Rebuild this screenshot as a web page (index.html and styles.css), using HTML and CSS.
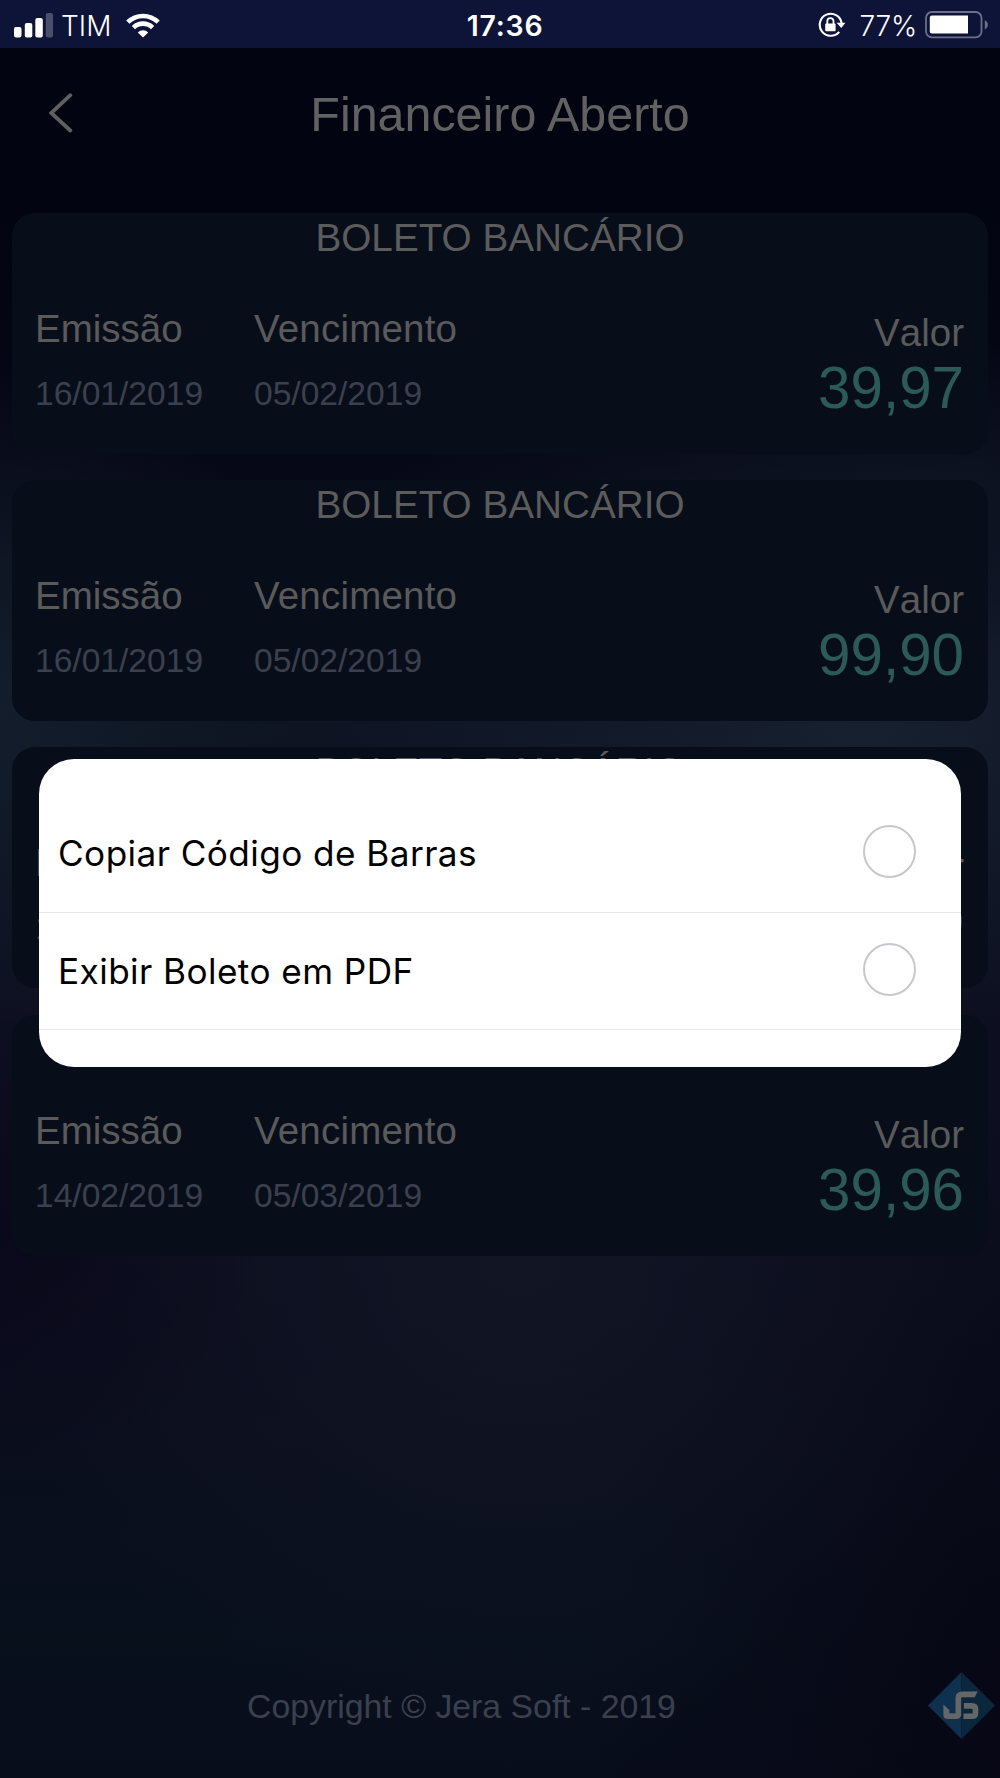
FILE: index.html
```html
<!DOCTYPE html>
<html lang="pt-BR">
<head>
<meta charset="utf-8">
<title>Financeiro Aberto</title>
<link rel="stylesheet" href="styles.css">
</head>
<body>
<div class="screen">
  <div class="status-bar">
    <div class="status-left">
      <svg class="signal" width="39" height="25" viewBox="0 0 39 25">
        <rect x="0" y="14" width="7.5" height="10.5" rx="2" fill="#fff"/>
        <rect x="10.8" y="10" width="7.5" height="14.5" rx="2" fill="#fff"/>
        <rect x="21.3" y="5" width="7.5" height="19.5" rx="2" fill="#fff"/>
        <rect x="31.8" y="0" width="7.2" height="24.5" rx="2" fill="#4b4f6b"/>
      </svg>
      <span class="carrier">TIM</span>
      <svg class="wifi" width="34" height="25" viewBox="0 0 34 25">
        <g fill="none" stroke="#fff" stroke-width="4.6">
          <path d="M1.8 9.2A21.6 21.6 0 0 1 32.2 9.2"/>
          <path d="M7.4 14.6A13.6 13.6 0 0 1 26.6 14.6"/>
        </g>
        <path d="M17 24.6L11.8 19.4A7.4 7.4 0 0 1 22.2 19.4Z" fill="#fff"/>
      </svg>
    </div>
    <div class="clock">17:36</div>
    <div class="status-right">
      <svg class="lock" width="28" height="26" viewBox="0 0 28 26">
        <path d="M21.2 19.8A11 11 0 1 1 23.6 11" fill="none" stroke="#fff" stroke-width="2.1"/>
        <path d="M18.6 10.8H27.4L23.3 16Z" fill="#fff"/>
        <rect x="7.2" y="11.6" width="10.4" height="7.6" rx="1" fill="#fff"/>
        <path d="M9.3 12V9.2a3.1 3.1 0 0 1 6.2 0V12" fill="none" stroke="#fff" stroke-width="1.8"/>
      </svg>
      <span class="percent">77%</span>
      <svg class="battery" width="63" height="28" viewBox="0 0 63 28">
        <rect x="1" y="1" width="55.5" height="25.4" rx="6" fill="none" stroke="#6c7089" stroke-width="1.8"/>
        <path d="M59.8 9.2Q62.8 10.5 62.8 13.8T59.8 18.4Z" fill="#6c7089"/>
        <path d="M7 4.6H43V22.4H7Q4.8 22.4 4.8 20.2V6.8Q4.8 4.6 7 4.6Z" fill="#fff"/>
      </svg>
    </div>
  </div>

  <header class="header">
    <svg class="back" width="24" height="40" viewBox="0 0 24 40">
      <path d="M21.3 2.2L2.2 20L21.3 37.5" fill="none" stroke="#5f5f60" stroke-width="3.8" stroke-linecap="round"/>
    </svg>
    <h1 class="title">Financeiro Aberto</h1>
  </header>

  <main class="cards">
    <article class="card">
      <h2 class="card-title">BOLETO BANCÁRIO</h2>
      <div class="card-body">
        <div class="field"><span class="label">Emissão</span><span class="date">16/01/2019</span></div>
        <div class="field"><span class="label">Vencimento</span><span class="date">05/02/2019</span></div>
        <div class="amount"><span class="label">Valor</span><span class="value">39,97</span></div>
      </div>
    </article>
    <article class="card">
      <h2 class="card-title">BOLETO BANCÁRIO</h2>
      <div class="card-body">
        <div class="field"><span class="label">Emissão</span><span class="date">16/01/2019</span></div>
        <div class="field"><span class="label">Vencimento</span><span class="date">05/02/2019</span></div>
        <div class="amount"><span class="label">Valor</span><span class="value">99,90</span></div>
      </div>
    </article>
    <article class="card">
      <h2 class="card-title">BOLETO BANCÁRIO</h2>
      <div class="card-body">
        <div class="field"><span class="label">Emissão</span><span class="date">14/02/2019</span></div>
        <div class="field"><span class="label">Vencimento</span><span class="date">05/03/2019</span></div>
        <div class="amount"><span class="label">Valor</span><span class="value">99,90</span></div>
      </div>
    </article>
    <article class="card">
      <h2 class="card-title">BOLETO BANCÁRIO</h2>
      <div class="card-body">
        <div class="field"><span class="label">Emissão</span><span class="date">14/02/2019</span></div>
        <div class="field"><span class="label">Vencimento</span><span class="date">05/03/2019</span></div>
        <div class="amount"><span class="label">Valor</span><span class="value">39,96</span></div>
      </div>
    </article>
  </main>

  <footer class="footer">
    <p class="copyright">Copyright © Jera Soft - 2019</p>
    <svg class="logo" width="67" height="67" viewBox="0 0 68 68">
      <path d="M34 0L0 34L34 68Z" fill="#0f3150"/>
      <path d="M34 0L68 34L34 68Z" fill="#0b273c"/>
      <g fill="none" stroke="#646667" stroke-width="5.8" stroke-linejoin="round">
        <path d="M30.8 44.9V26.5Q30.8 22.8 34.6 22.8H47.5"/>
        <path d="M22 44.9H28Q30.8 44.9 30.8 42"/>
        <path d="M36.4 34.4H44.6Q48.2 34.4 48.2 37.7V41.4Q48.2 44.9 44.8 44.9H36"/>
      </g>
      <path d="M15.6 33L21.6 38.5V42H25V47.8H20Q15.6 47.8 15.6 43.4Z" fill="#646667"/>
      <path d="M46 19.9H50.4L47.4 25.7H46Z" fill="#646667"/>
    </svg>
  </footer>

  <div class="modal">
    <div class="option"><span>Copiar Código de Barras</span><i class="radio"></i></div>
    <div class="option"><span>Exibir Boleto em PDF</span><i class="radio"></i></div>
  </div>
</div>
</body>
</html>
```
FILE: styles.css
```css
* { box-sizing: border-box; }

body { margin: 0; background: #070a16; }

.screen {
  position: relative;
  display: flex;
  flex-direction: column;
  width: 1000px;
  height: 1778px;
  overflow: hidden;
  font-family: "Liberation Sans", Arial, sans-serif;
  background:
    radial-gradient(ellipse 560px 160px at 920px 500px, #0e1422 0%, rgba(14, 20, 34, 0) 100%),
    radial-gradient(ellipse 620px 290px at 860px 730px, #17202f 0%, rgba(20, 28, 44, 0.7) 45%, rgba(20, 28, 44, 0) 100%),
    radial-gradient(ellipse 330px 340px at 0 710px, #131d2b 0%, rgba(15, 24, 38, 0) 100%),
    radial-gradient(ellipse 260px 240px at 0 1230px, #0a091b 0%, rgba(10, 9, 27, 0) 100%),
    radial-gradient(ellipse 520px 480px at 520px 1260px, #111524 0%, rgba(15, 18, 33, 0) 100%),
    radial-gradient(ellipse 420px 620px at 1000px 1700px, #070715 0%, rgba(7, 7, 21, 0) 100%),
    linear-gradient(#030411 0, #030411 210px, #060716 450px, #0c1220 720px, #0d0f20 1050px, #0b0d1d 1350px, #08101c 1640px, #080d1b 1778px);
}

.status-bar {
  display: grid;
  grid-template-columns: 1fr auto 1fr;
  align-items: center;
  height: 48px;
  padding: 0 12px 0 14px;
  background: #0e1338;
  color: #fff;
  font-family: Inter, "Noto Sans", sans-serif;
  font-size: 28px;
  line-height: 48px;
}

.status-left, .status-right { display: flex; align-items: center; }
.status-right { justify-content: flex-end; }
.carrier { margin-left: 8px; padding-top: 2px; font-weight: 300; }
.wifi { margin-left: 15px; }
.clock { padding: 2px 0 0 8px; font-size: 28.4px; font-weight: 600; letter-spacing: 0.8px; }
.percent { margin: 0 8px 0 13px; padding-top: 2px; font-weight: 300; letter-spacing: -0.2px; }
.battery { flex: none; }

.header {
  display: grid;
  grid-template-columns: 100px 1fr 100px;
  align-items: start;
  height: 165px;
  padding-top: 36px;
}

.back { margin: 9px 0 0 49px; }

.title {
  margin: 0;
  color: #616162;
  font-size: 48.4px;
  font-weight: 400;
  line-height: 60px;
  text-align: center;
}

.cards {
  display: flex;
  flex-direction: column;
  gap: 26.2px;
  padding: 0 12px;
}

.card {
  height: 241px;
  padding: 3px 24px 0 23px;
  border-radius: 23px;
  background: #080e19;
}

.card-title {
  margin: 0 0 47px 1px;
  color: #5c5c5d;
  font-size: 38.7px;
  font-weight: 400;
  line-height: 44px;
  text-align: center;
}

.card-body { display: flex; align-items: flex-start; }
.field { display: flex; flex-direction: column; gap: 23px; width: 219px; }
.label { color: #5a5a5b; font-size: 38.5px; line-height: 44px; }
.field + .field .label { letter-spacing: 0.2px; }
.date { color: #3b404e; font-size: 33.6px; line-height: 40px; }

.amount {
  display: flex;
  flex-direction: column;
  align-items: flex-end;
  gap: 3px;
  margin-left: auto;
  padding-top: 4px;
}

.amount .label { font-kerning: none; }
.value { color: #2c5a59; font-size: 58.3px; line-height: 60px; }

.footer {
  display: flex;
  align-items: center;
  margin-top: auto;
  padding: 0 5px 39px 0;
}

.copyright {
  flex: 1;
  margin: 0;
  padding-right: 5px;
  color: #3b404e;
  font-size: 33.8px;
  line-height: 40px;
  text-align: center;
}

.modal {
  position: absolute;
  top: 759px;
  left: 39px;
  width: 922px;
  height: 308px;
  padding-top: 36px;
  border-radius: 35px;
  background: #fff;
  overflow: hidden;
}

.option {
  display: flex;
  align-items: center;
  justify-content: space-between;
  height: 117.5px;
  padding: 0 45px 3px 19px;
  border-bottom: 1.5px solid #e6e6e7;
  color: #000;
  font-family: Inter, "Noto Sans", sans-serif;
  font-size: 35.2px;
  letter-spacing: 0.42px;
}

.option span { padding-top: 3px; }

.radio {
  width: 53px;
  height: 53px;
  border: 2px solid #c8c8cc;
  border-radius: 50%;
}
```
